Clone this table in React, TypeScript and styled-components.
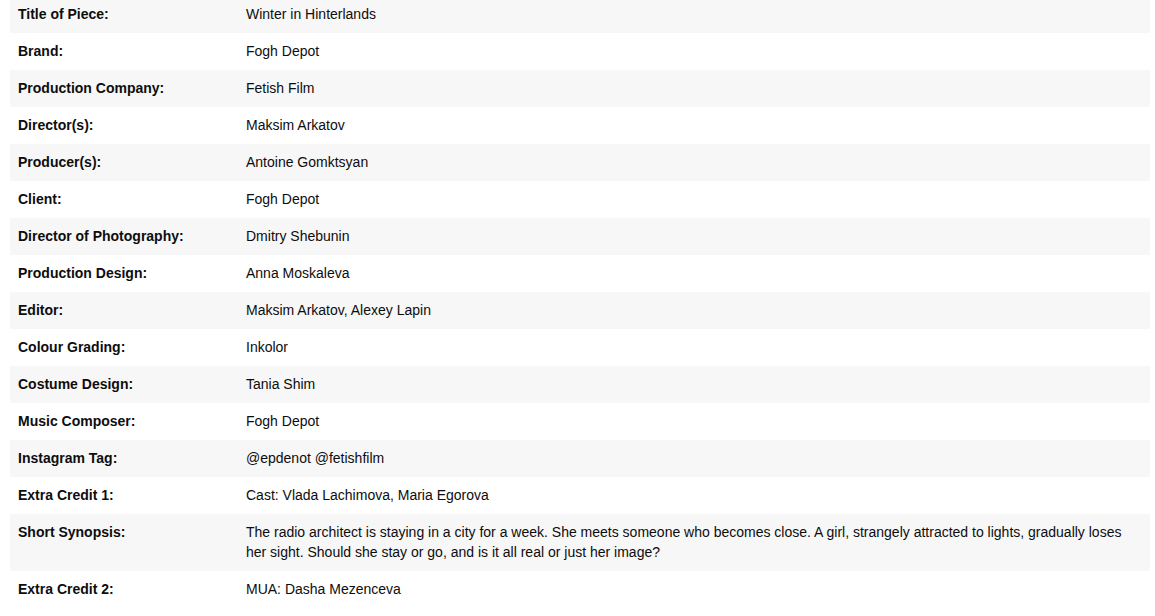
import React from "react";
import styled, { createGlobalStyle } from "styled-components";

const GlobalStyle = createGlobalStyle`
  html, body {
    margin: 0;
    padding: 0;
    background: #ffffff;
  }
  body {
    font-family: "Liberation Sans", Arial, sans-serif;
    color: #0d0d0d;
  }
`;

const credits = [
  { label: "Title of Piece:", value: "Winter in Hinterlands" },
  { label: "Brand:", value: "Fogh Depot" },
  { label: "Production Company:", value: "Fetish Film" },
  { label: "Director(s):", value: "Maksim Arkatov" },
  { label: "Producer(s):", value: "Antoine Gomktsyan" },
  { label: "Client:", value: "Fogh Depot" },
  { label: "Director of Photography:", value: "Dmitry Shebunin" },
  { label: "Production Design:", value: "Anna Moskaleva" },
  { label: "Editor:", value: "Maksim Arkatov, Alexey Lapin" },
  { label: "Colour Grading:", value: "Inkolor" },
  { label: "Costume Design:", value: "Tania Shim" },
  { label: "Music Composer:", value: "Fogh Depot" },
  { label: "Instagram Tag:", value: "@epdenot @fetishfilm" },
  { label: "Extra Credit 1:", value: "Cast: Vlada Lachimova, Maria Egorova" },
  {
    label: "Short Synopsis:",
    value:
      "The radio architect is staying in a city for a week. She meets someone who becomes close. A girl, strangely attracted to lights, gradually loses her sight. Should she stay or go, and is it all real or just her image?",
  },
  { label: "Extra Credit 2:", value: "MUA: Dasha Mezenceva" },
];

const Page = styled.div`
  padding: 0 5px 0 10px;
  margin-top: -4px;
`;

const Table = styled.div`
  display: flex;
  flex-direction: column;
`;

const Row = styled.div<{ $shaded: boolean }>`
  display: grid;
  grid-template-columns: 236px 1fr;
  background: ${(p) => (p.$shaded ? "#f7f7f7" : "#ffffff")};
`;

const Label = styled.div`
  padding: 8px 8px 9px;
  font-size: 14px;
  font-weight: 700;
  line-height: 20px;
`;

const Value = styled.div`
  padding: 8px 8px 9px 0;
  font-size: 14px;
  line-height: 20px;
`;

export default function App() {
  return (
    <>
      <GlobalStyle />
      <Page>
        <Table>
          {credits.map((c, i) => (
            <Row key={c.label} $shaded={i % 2 === 0}>
              <Label>{c.label}</Label>
              <Value>{c.value}</Value>
            </Row>
          ))}
        </Table>
      </Page>
    </>
  );
}
